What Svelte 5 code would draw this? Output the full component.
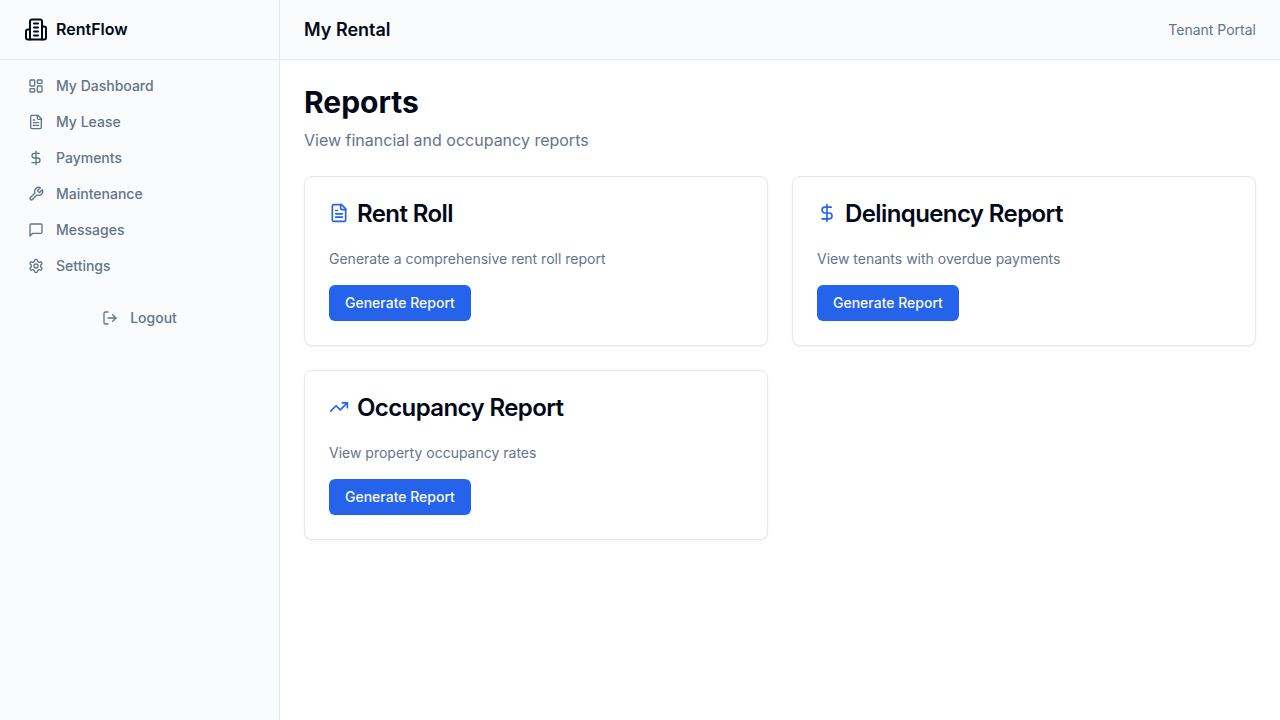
<script>
  const icons = {
    building: ['M6 22V4a2 2 0 0 1 2-2h8a2 2 0 0 1 2 2v18Z', 'M6 12H4a2 2 0 0 0-2 2v6a2 2 0 0 0 2 2h2', 'M18 9h2a2 2 0 0 1 2 2v9a2 2 0 0 1-2 2h-2', 'M10 6h4', 'M10 10h4', 'M10 14h4', 'M10 18h4'],
    dashboard: ['M4 3h5a1 1 0 0 1 1 1v7a1 1 0 0 1-1 1H4a1 1 0 0 1-1-1V4a1 1 0 0 1 1-1Z', 'M15 3h5a1 1 0 0 1 1 1v3a1 1 0 0 1-1 1h-5a1 1 0 0 1-1-1V4a1 1 0 0 1 1-1Z', 'M15 12h5a1 1 0 0 1 1 1v7a1 1 0 0 1-1 1h-5a1 1 0 0 1-1-1v-7a1 1 0 0 1 1-1Z', 'M4 16h5a1 1 0 0 1 1 1v3a1 1 0 0 1-1 1H4a1 1 0 0 1-1-1v-3a1 1 0 0 1 1-1Z'],
    file: ['M15 2H6a2 2 0 0 0-2 2v16a2 2 0 0 0 2 2h12a2 2 0 0 0 2-2V7Z', 'M14 2v4a2 2 0 0 0 2 2h4', 'M10 9H8', 'M16 13H8', 'M16 17H8'],
    dollar: ['M12 2v20', 'M17 5H9.5a3.5 3.5 0 0 0 0 7h5a3.5 3.5 0 0 1 0 7H6'],
    wrench: ['M14.7 6.3a1 1 0 0 0 0 1.4l1.6 1.6a1 1 0 0 0 1.4 0l3.77-3.77a6 6 0 0 1-7.94 7.94l-6.91 6.91a2.12 2.12 0 0 1-3-3l6.91-6.91a6 6 0 0 1 7.94-7.94l-3.76 3.76z'],
    message: ['M21 15a2 2 0 0 1-2 2H7l-4 4V5a2 2 0 0 1 2-2h14a2 2 0 0 1 2 2z'],
    settings: ['M12.22 2h-.44a2 2 0 0 0-2 2v.18a2 2 0 0 1-1 1.73l-.43.25a2 2 0 0 1-2 0l-.15-.08a2 2 0 0 0-2.73.73l-.22.38a2 2 0 0 0 .73 2.73l.15.1a2 2 0 0 1 1 1.72v.51a2 2 0 0 1-1 1.74l-.15.09a2 2 0 0 0-.73 2.73l.22.38a2 2 0 0 0 2.73.73l.15-.08a2 2 0 0 1 2 0l.43.25a2 2 0 0 1 1 1.73V20a2 2 0 0 0 2 2h.44a2 2 0 0 0 2-2v-.18a2 2 0 0 1 1-1.73l.43-.25a2 2 0 0 1 2 0l.15.08a2 2 0 0 0 2.73-.73l.22-.39a2 2 0 0 0-.73-2.73l-.15-.08a2 2 0 0 1-1-1.74v-.5a2 2 0 0 1 1-1.74l.15-.09a2 2 0 0 0 .73-2.73l-.22-.38a2 2 0 0 0-2.73-.73l-.15.08a2 2 0 0 1-2 0l-.43-.25a2 2 0 0 1-1-1.73V4a2 2 0 0 0-2-2z', 'M15 12a3 3 0 1 1-6 0a3 3 0 1 1 6 0'],
    logout: ['M9 21H5a2 2 0 0 1-2-2V5a2 2 0 0 1 2-2h4', 'M16 17l5-5-5-5', 'M21 12H9'],
    trending: ['M22 7l-8.5 8.5-5-5L2 17', 'M16 7h6v6'],
  };
  const nav = [
    ['dashboard', 'My Dashboard'],
    ['file', 'My Lease'],
    ['dollar', 'Payments'],
    ['wrench', 'Maintenance'],
    ['message', 'Messages'],
    ['settings', 'Settings'],
  ];
  const reports = [
    ['file', 'Rent Roll', 'Generate a comprehensive rent roll report'],
    ['dollar', 'Delinquency Report', 'View tenants with overdue payments'],
    ['trending', 'Occupancy Report', 'View property occupancy rates'],
  ];
</script>

{#snippet icon(name, size)}
  <svg width={size} height={size} viewBox="0 0 24 24" fill="none" stroke="currentColor" stroke-width="2" stroke-linecap="round" stroke-linejoin="round" aria-hidden="true">
    {#each icons[name] as d}<path {d} />{/each}
  </svg>
{/snippet}

<div class="layout">
  <aside>
    <div class="brand">{@render icon('building', 24)}<span>RentFlow</span></div>
    <nav>
      {#each nav as [glyph, label]}
        <a href="#top">{@render icon(glyph, 16)}{label}</a>
      {/each}
    </nav>
    <button class="logout">{@render icon('logout', 16)}Logout</button>
  </aside>
  <div class="content">
    <header>
      <h2>My Rental</h2>
      <span>Tenant Portal</span>
    </header>
    <main>
      <div class="intro">
        <h1>Reports</h1>
        <p>View financial and occupancy reports</p>
      </div>
      <div class="grid">
        {#each reports as [glyph, title, text]}
          <section>
            <h3>{@render icon(glyph, 20)}<span>{title}</span></h3>
            <p>{text}</p>
            <button class="primary">Generate Report</button>
          </section>
        {/each}
      </div>
    </main>
  </div>
</div>

<style>
  :global(body) { background: #fff; }
  * { box-sizing: border-box; }
  h1, h2, h3, p { margin: 0; }
  svg { flex-shrink: 0; display: block; }
  button { font: inherit; border: 0; cursor: pointer; }
  .layout {
    display: grid;
    grid-template-columns: 280px 1fr;
    min-height: 100vh;
    font-family: Inter, sans-serif;
    font-size: 16px;
    line-height: 24px;
    color: #020817;
  }
  aside { background: #f9fbfd; border-right: 1px solid #e2e8f0; }
  .brand {
    display: flex;
    align-items: center;
    gap: 8px;
    height: 60px;
    padding: 0 24px;
    border-bottom: 1px solid #e2e8f0;
    font-weight: 600;
  }
  .brand span { padding-bottom: 2px; }
  .brand path { transform: translateY(-0.5px); }
  nav { padding: 8px 16px 0; }
  nav a, .logout {
    display: flex;
    align-items: center;
    gap: 12px;
    height: 36px;
    padding: 0 12px;
    color: #64748b;
    text-decoration: none;
    font-size: 14px;
    line-height: 20px;
    font-weight: 500;
  }
  .logout {
    justify-content: center;
    width: 247px;
    margin: 16px 16px 0;
    background: transparent;
  }
  header {
    display: flex;
    align-items: center;
    justify-content: space-between;
    height: 60px;
    padding: 0 24px;
    background: #f9fbfd;
    border-bottom: 1px solid #e2e8f0;
  }
  h2 { font-size: 18px; line-height: 28px; font-weight: 600; }
  header span { font-size: 14px; line-height: 20px; color: #64748b; }
  main { padding: 24px; display: flex; flex-direction: column; gap: 24px; }
  h1 { font-size: 30px; line-height: 36px; font-weight: 700; }
  .intro p { margin-top: 8px; color: #64748b; }
  .intro { height: 68px; }
  .grid { display: grid; grid-template-columns: 1fr 1fr; gap: 24px; }
  section {
    height: 170px;
    padding: 24px;
    border: 1px solid #e2e8f0;
    border-radius: 8px;
    background: #fff;
    box-shadow: 0 1px 2px rgb(0 0 0 / 0.05);
  }
  h3 {
    display: flex;
    align-items: center;
    gap: 8px;
    height: 24px;
    font-size: 24px;
    line-height: 24px;
    font-weight: 600;
    letter-spacing: -0.6px;
  }
  h3 span { padding-top: 2px; }
  h3 svg { color: #2563eb; }
  section p { margin: 24px 0 16px; font-size: 14px; line-height: 20px; color: #64748b; }
  .primary {
    height: 36px;
    padding: 0 16px;
    border-radius: 6px;
    background: #2563eb;
    color: #f8fafc;
    font-size: 14px;
    line-height: 20px;
    font-weight: 500;
    box-shadow: 0 1px 2px rgb(0 0 0 / 0.05);
  }
</style>
